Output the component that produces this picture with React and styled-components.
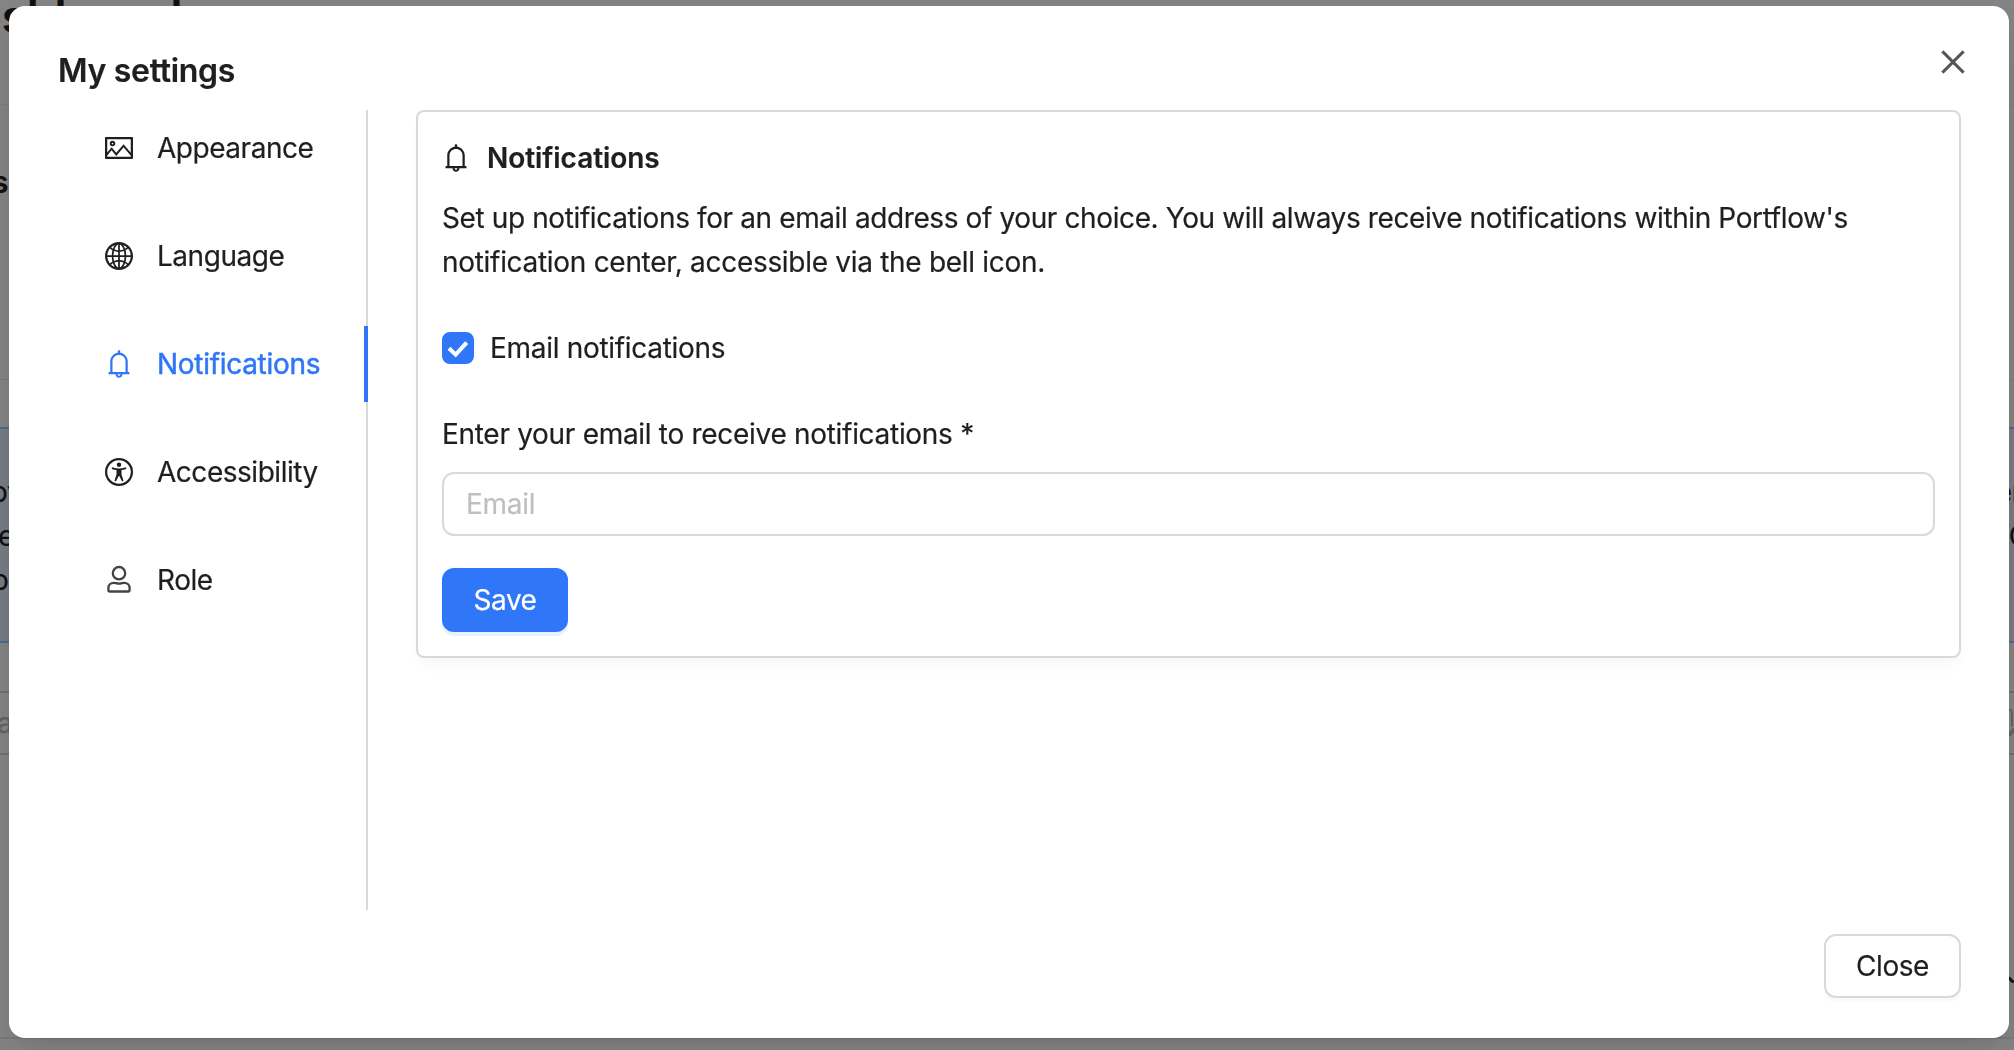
import React, { useState } from "react";
import styled, { createGlobalStyle } from "styled-components";
import {
  AiOutlineBell,
  AiOutlineClose,
  AiOutlineGlobal,
  AiOutlinePicture,
} from "react-icons/ai";

const GlobalStyle = createGlobalStyle`
  * {
    box-sizing: border-box;
  }

  body {
    margin: 0;
    overflow: hidden;
    background: #868686;
    color: #1f1f1f;
    font-family: Inter, "Liberation Sans", Arial, sans-serif;
    font-size: 28px;
    line-height: 44px;
    letter-spacing: -0.3px;
    -webkit-text-stroke: 0.2px currentColor;
  }

  svg {
    display: block;
    flex: none;
  }
`;

const Page = styled.div`
  height: 1050px;
  overflow: hidden;
  white-space: nowrap;
  color: #111;
  display: flex;
  flex-direction: column;
`;

const PageHeader = styled.div`
  height: 105px;
  border-bottom: 1px solid #7f7f7f;
`;

const PageTitle = styled.div`
  margin-left: -57px;
  font-size: 46px;
  font-weight: 600;
  line-height: 33px;
  letter-spacing: -0.4px;
`;

const PageSection = styled.div`
  height: 322px;
  padding-top: 55px;
  background: linear-gradient(#7b7b7b, #7b7b7b) 0 274px / 100% 1px no-repeat;
`;

const SectionTitle = styled.div`
  margin-left: -8px;
  font-size: 30px;
  font-weight: 600;
`;

const Notice = styled.div`
  height: 216px;
  padding-top: 41px;
  border: solid #4f6c92;
  border-width: 2px 0;
  background: #797e87;
`;

const NoticeLine = styled.div`
  display: flex;
  justify-content: space-between;
  margin-left: ${(p) => p.$left}px;
  margin-right: ${(p) => p.$right}px;
`;

const SearchRow = styled.div`
  height: 64px;
  margin-top: 48px;
  padding-top: 8px;
  border: solid #727272;
  border-width: 2px 0;
  color: #646464;
`;

const PageFooter = styled.div`
  flex: 1;
  display: flex;
  justify-content: flex-end;
  padding-top: 220px;
  background: linear-gradient(#7b7b7b, #7b7b7b) 0 282px / 100% 2px no-repeat;
`;

const Modal = styled.div`
  position: fixed;
  top: 6px;
  left: 9px;
  width: 2000px;
  height: 1032px;
  padding: 40px 48px;
  display: flex;
  flex-direction: column;
  background: #fff;
  border-radius: 16px;
  box-shadow: 0 12px 32px rgba(0, 0, 0, 0.08),
    0 6px 12px -8px rgba(0, 0, 0, 0.12), 0 18px 56px 16px rgba(0, 0, 0, 0.05);
`;

const ModalHeader = styled.div`
  display: flex;
  justify-content: space-between;
  height: 64px;
`;

const ModalTitle = styled.div`
  padding-left: 1px;
  font-size: 32px;
  font-weight: 600;
  line-height: 50px;
`;

const CloseIcon = styled.button`
  display: flex;
  align-items: center;
  justify-content: center;
  width: 32px;
  height: 32px;
  margin-right: -8px;
  padding: 0;
  border: 0;
  background: none;
  color: #555;
  font-size: 34px;
  cursor: pointer;

  svg {
    stroke: currentColor;
    stroke-width: 12px;
  }
`;

const ModalBody = styled.div`
  display: flex;
  height: 800px;
`;

const Nav = styled.div`
  width: 311px;
  display: flex;
  flex-direction: column;
  gap: 32px;
  border-right: 2px solid #d9d9d9;
`;

const NavItem = styled.div`
  height: 76px;
  margin-right: -2px;
  padding-left: 46px;
  display: flex;
  align-items: center;
  gap: 22px;
  border-right: 4px solid ${(p) => (p.$active ? "#2f76f8" : "transparent")};
  color: ${(p) => (p.$active ? "#2f76f8" : "#1f1f1f")};
  -webkit-text-stroke: ${(p) => (p.$active ? "0.5px" : "0.2px")} currentColor;
  letter-spacing: ${(p) => (p.$active ? "-0.3px" : "-0.47px")};
  cursor: pointer;

  svg {
    width: 32px;
    height: 32px;
  }
`;

const Card = styled.div`
  flex: 1;
  height: 548px;
  margin-left: 48px;
  padding: 24px;
  border: 2px solid #d9d9d9;
  border-radius: 8px;
  box-shadow: 0 10px 16px -4px rgba(0, 0, 0, 0.04);
`;

const CardTitle = styled.div`
  display: flex;
  align-items: center;
  gap: 15px;
  margin-left: -2px;
  font-weight: 600;
  letter-spacing: -0.05px;

  svg {
    width: 32px;
    height: 32px;
  }
`;

const Text = styled.p`
  margin: 16px 0 0;

  span {
    letter-spacing: -0.39px;
  }
`;

const CheckLabel = styled.label`
  display: flex;
  align-items: center;
  gap: 16px;
  margin-top: 42px;
  cursor: pointer;
`;

const CheckBox = styled.span`
  width: 32px;
  height: 32px;
  border-radius: 8px;
  background: ${(p) => (p.$on ? "#2f76f8" : "#fff")};
  border: 2px solid ${(p) => (p.$on ? "#2f76f8" : "#d9d9d9")};
`;

const HiddenInput = styled.input`
  display: none;
`;

const FieldLabel = styled.div`
  margin-top: 42px;
`;

const EmailInput = styled.input`
  display: block;
  width: 100%;
  height: 64px;
  margin-top: 16px;
  padding: 0 22px;
  border: 2px solid #d9d9d9;
  border-radius: 12px;
  outline: none;
  font: inherit;
  letter-spacing: inherit;

  &::placeholder {
    color: #bfbfbf;
  }
`;

const Button = styled.button`
  display: block;
  width: ${(p) => (p.$primary ? 126 : 137)}px;
  height: 64px;
  padding: 0;
  border: 2px solid ${(p) => (p.$primary ? "#2f76f8" : "#d9d9d9")};
  border-radius: 12px;
  background: ${(p) => (p.$primary ? "#2f76f8" : "#fff")};
  color: ${(p) => (p.$primary ? "#fff" : "#1f1f1f")};
  box-shadow: 0 4px 0 ${(p) => (p.$primary ? "#e8f2fe" : "#fafafa")};
  font: inherit;
  letter-spacing: -0.45px;
  cursor: pointer;
`;

const SaveRow = styled.div`
  margin-top: 32px;
`;

const ModalFooter = styled.div`
  display: flex;
  justify-content: flex-end;
  margin-top: 24px;
`;

const AccessIcon = () => (
  <svg viewBox="-2 -2 32 32" fill="none" stroke="currentColor">
    <circle cx="14" cy="14" r="12.900" strokeWidth="2.2" />
    <circle cx="14" cy="6.800" r="2.2" fill="currentColor" stroke="none" />
    <path
      d="M7.700 10.400q6.300 2.200 12.600 0"
      strokeWidth="2"
      strokeLinecap="round"
    />
    <path
      d="M11.500 11.200h5v5.300l1.900 5.700c.3 1-1.300 1.600-1.700.6L14.300 18h-.6l-2.400 4.800c-.4 1-2 .4-1.700-.6l1.900-5.700z"
      fill="currentColor"
      stroke="none"
    />
  </svg>
);

const RoleIcon = () => (
  <svg viewBox="-2 -2 32 32" fill="none" stroke="#444" strokeWidth="2.3">
    <circle cx="14" cy="7.200" r="6.200" />
    <path d="M8.700 16.800C10.800 16.800 11.400 17.700 14 17.700s3.200-.9 5.300-.9c3 0 5.300 2.300 5.300 5.300v1.900c0 .9-.6 1.500-1.500 1.500H4.900c-.9 0-1.500-.6-1.500-1.500v-1.900c0-3 2.300-5.300 5.300-5.300z" />
  </svg>
);

const CheckMark = () => (
  <svg width="28" height="28" viewBox="0 0 28 28" fill="none">
    <path d="M5 14.200l6.600 6.400L22.700 8.600" stroke="#fff" strokeWidth="4" />
  </svg>
);

const SearchIcon = () => (
  <svg width="5" height="40" viewBox="0 0 5 40" fill="none" stroke="#666">
    <path d="M0 8.500q3 .5 3 4v13" strokeWidth="2" />
    <path d="M0 34l6-6" strokeWidth="4" />
  </svg>
);

const MoreIcon = () => (
  <svg width="5" height="10" viewBox="0 0 5 10">
    <path d="M0 3l3.500 3.500" stroke="#111" strokeWidth="3" strokeLinecap="round" />
  </svg>
);

const items = [
  { name: "Appearance", icon: <AiOutlinePicture /> },
  { name: "Language", icon: <AiOutlineGlobal /> },
  { name: "Notifications", icon: <AiOutlineBell /> },
  { name: "Accessibility", icon: <AccessIcon /> },
  { name: "Role", icon: <RoleIcon /> },
];

const App = () => {
  const [active, setActive] = useState("Notifications");
  const [checked, setChecked] = useState(true);
  const [email, setEmail] = useState("");

  return (
    <>
      <GlobalStyle />
      <Page>
        <PageHeader>
          <PageTitle>Dashboard</PageTitle>
        </PageHeader>
        <PageSection>
          <SectionTitle>s</SectionTitle>
        </PageSection>
        <Notice>
          <NoticeLine $left={-9} $right={-8}>
            <span>ov</span>
            <span>er</span>
          </NoticeLine>
          <NoticeLine $left={-2} $right={-15}>
            <span>e</span>
            <span>C</span>
          </NoticeLine>
          <NoticeLine $left={-8} $right={0}>
            <span>o</span>
          </NoticeLine>
        </Notice>
        <SearchRow>
          <NoticeLine $left={-3} $right={0}>
            <span>a</span>
            <SearchIcon />
          </NoticeLine>
        </SearchRow>
        <PageFooter>
          <MoreIcon />
        </PageFooter>
      </Page>
      <Modal>
        <ModalHeader>
          <ModalTitle>My settings</ModalTitle>
          <CloseIcon aria-label="Close">
            <AiOutlineClose />
          </CloseIcon>
        </ModalHeader>
        <ModalBody>
          <Nav>
            {items.map((item) => (
              <NavItem
                key={item.name}
                $active={item.name === active}
                onClick={() => setActive(item.name)}
              >
                {item.icon}
                <span>{item.name}</span>
              </NavItem>
            ))}
          </Nav>
          <Card>
            <CardTitle>
              <AiOutlineBell />
              <span>Notifications</span>
            </CardTitle>
            <Text>
              <span>
                Set up notifications for an email address of your choice. You
                will always receive notifications within Portflow's
              </span>
              <br />
              notification center, accessible via the bell icon.
            </Text>
            <CheckLabel>
              <HiddenInput
                type="checkbox"
                checked={checked}
                onChange={() => setChecked(!checked)}
              />
              <CheckBox $on={checked}>{checked && <CheckMark />}</CheckBox>
              <span>Email notifications</span>
            </CheckLabel>
            <FieldLabel>Enter your email to receive notifications *</FieldLabel>
            <EmailInput
              placeholder="Email"
              value={email}
              onChange={(e) => setEmail(e.target.value)}
            />
            <SaveRow>
              <Button $primary>Save</Button>
            </SaveRow>
          </Card>
        </ModalBody>
        <ModalFooter>
          <Button>Close</Button>
        </ModalFooter>
      </Modal>
    </>
  );
};

export default App;
